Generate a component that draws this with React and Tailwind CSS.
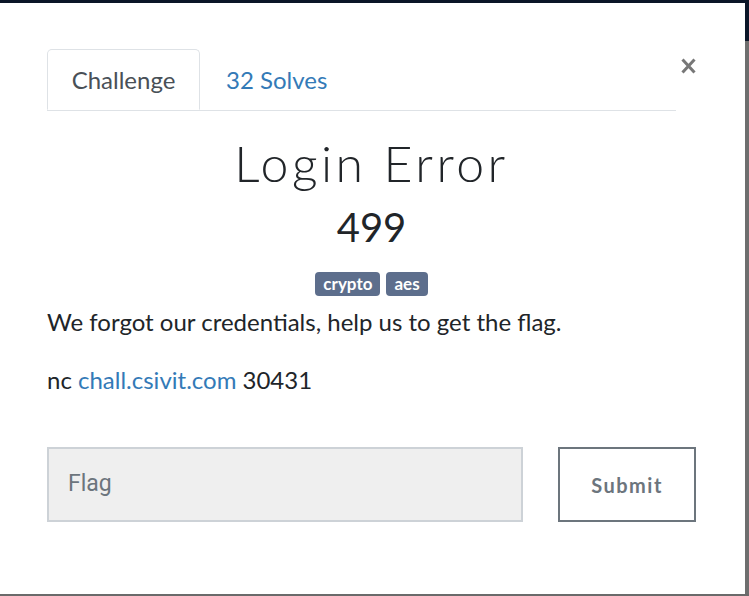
export default function App() {
  return (
    <div className="w-[749px] h-[596px] bg-[#0b1628] flex flex-col overflow-hidden" style={{ fontFamily: "Lato, 'Noto Sans', sans-serif" }}>
      <div className="h-[3px] shrink-0" />
      <div className="flex flex-1 min-h-0">
        <div className="w-[745px] bg-white flex flex-col pl-[47px] pr-[49px] pt-[46px]">
          <div className="flex items-start">
            <div className="flex-1 flex border-b border-[#dee2e6]">
              <div className="w-[153px] h-[61px] -mb-px border border-[#dee2e6] border-b-white bg-white rounded-t-[5px] flex items-center justify-center text-[24px] text-[#495057]">
                Challenge
              </div>
              <div className="h-[61px] px-[26px] flex items-center text-[24px] text-[#337ab7]">
                32 Solves
              </div>
            </div>
            <div className="w-[20px] mt-[9px] flex justify-end">
              <svg width="15" height="16" viewBox="0 0 15 16">
                <path d="M1.5 1.5 L13.5 14.5 M13.5 1.5 L1.5 14.5" stroke="#777" strokeWidth="3" strokeLinecap="butt" />
              </svg>
            </div>
          </div>
          <div className="flex flex-col items-center">
            <div className="mt-[22px] text-[50px] leading-[60px] font-light text-[#212529] tracking-[3.5px]">Login Error</div>
            <div className="mt-[9px] text-[40px] leading-[50px] font-normal text-[#212529]">499</div>
            <div className="mt-[20px] flex gap-[6px]">
              <span className="h-[24px] px-[8px] rounded-[4px] bg-[#5d6e8c] text-white text-[17px] font-bold flex items-center">crypto</span>
              <span className="h-[24px] px-[8px] rounded-[4px] bg-[#5d6e8c] text-white text-[17px] font-bold flex items-center">aes</span>
            </div>
          </div>
          <div className="mt-[9px] text-[24px] leading-[34px] text-[#212529]">
            We forgot our credentials, help us to get the flag.
          </div>
          <div className="mt-[24px] text-[24px] leading-[34px] text-[#212529]">
            nc <span className="text-[#337ab7]">chall.csivit.com</span> 30431
          </div>
          <div className="mt-[50px] flex">
            <div className="w-[476px] h-[75px] bg-[#efefef] border-2 border-[#cdd2d7] flex items-center pl-[19px] text-[23px] text-[#6c757d]" style={{ fontFamily: "Roboto, sans-serif" }}>
              Flag
            </div>
            <div className="ml-auto w-[138px] h-[75px] border-2 border-[#6c757d] flex items-center justify-center text-[20px] font-bold text-[#6c757d] tracking-[1.5px]">
              Submit
            </div>
          </div>
        </div>
        <div className="w-[4px] flex flex-col">
          <div className="h-[38px] bg-[#0b1628]" />
          <div className="flex-1 bg-[#6e6e6e]" />
        </div>
      </div>
      <div className="h-[2px] shrink-0 bg-[#6a6a6a]" />
    </div>
  );
}
